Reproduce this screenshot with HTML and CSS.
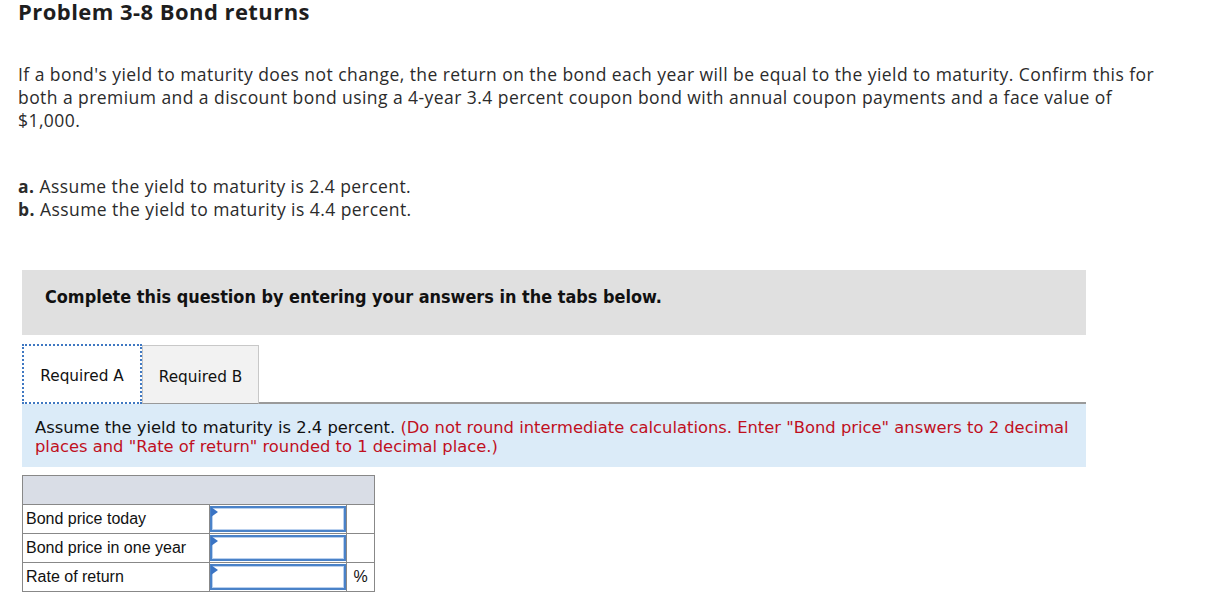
FILE: index.html
```html
<!DOCTYPE html>
<html>
<head>
<meta charset="utf-8">
<link rel="stylesheet" href="styles.css">
</head>
<body>
<div class="page">
  <h1 class="title">Problem 3-8 Bond returns</h1>
  <p class="intro">If a bond's yield to maturity does not change, the return on the bond each year will be equal to the yield to maturity. Confirm this for<br>both a premium and a discount bond using a 4-year 3.4 percent coupon bond with annual coupon payments and a face value of<br>$1,000.</p>
  <div class="parts">
    <div><b>a.</b> Assume the yield to maturity is 2.4 percent.</div>
    <div><b>b.</b> Assume the yield to maturity is 4.4 percent.</div>
  </div>
  <div class="notice">Complete this question by entering your answers in the tabs below.</div>
  <div class="tabs">
    <div class="tab active">Required A</div>
    <div class="tab">Required B</div>
    <div class="tab-rest"></div>
  </div>
  <div class="instr">Assume the yield to maturity is 2.4 percent. <span class="red">(Do not round intermediate calculations. Enter "Bond price" answers to 2 decimal<br>places and "Rate of return" rounded to 1 decimal place.)</span></div>
  <table class="grid">
    <tr class="head"><td colspan="3"></td></tr>
    <tr><td class="lbl">Bond price today</td><td class="inp"><div class="box"></div></td><td class="unit"></td></tr>
    <tr><td class="lbl">Bond price in one year</td><td class="inp"><div class="box"></div></td><td class="unit"></td></tr>
    <tr><td class="lbl">Rate of return</td><td class="inp"><div class="box"></div></td><td class="unit">%</td></tr>
  </table>
</div>
</body>
</html>
```
FILE: styles.css
```css
html, body { margin: 0; padding: 0; background: #fff; }
.page { padding: 0 0 0 18px; font-family: "Open Sans", "Liberation Sans", sans-serif; color: #2b2b2b; }
.title { margin: 0; font-size: 22px; line-height: 23px; font-weight: 700; letter-spacing: 0.45px; color: #1e1e1e; }
.intro { margin: 40px 0 0 0; font-size: 17.5px; line-height: 23px; letter-spacing: 0.44px; white-space: nowrap; }
.parts { margin-top: 43px; font-size: 17.5px; line-height: 23px; letter-spacing: 0.44px; }
.parts b { font-weight: 700; }
.notice { margin: 49px 0 0 4px; width: 1064px; height: 65px; box-sizing: border-box; padding: 16px 0 0 23px; background: #e0e0e0; font-family: "DejaVu Sans", sans-serif; font-stretch: condensed; font-weight: 700; font-size: 17.9px; color: #111; }
.tabs { margin: 9px 0 0 4px; width: 1064px; display: flex; align-items: flex-end; font-family: "DejaVu Sans", sans-serif; font-size: 15.3px; color: #111; }
.tab { height: 59px; box-sizing: border-box; display: flex; align-items: center; justify-content: center; padding-top: 4px; }
.tab.active { width: 120px; height: 60px; border: 2px dotted #3f78c2; background: #fff; }
.tab:not(.active) { width: 117px; background: #f2f2f2; border: 1px solid #c8c8c8; border-bottom: 1px solid #999; }
.tab-rest { flex: 1; border-bottom: 2px solid #9a9a9a; height: 0; }
.instr { margin-left: 4px; width: 1064px; box-sizing: border-box; height: 63px; padding: 14px 10px 0 13px; background: #dbebf8; font-family: "DejaVu Sans", sans-serif; font-size: 16.35px; line-height: 19px; color: #111; white-space: nowrap; }
.red { color: #c0101e; }
.grid { margin: 8px 0 0 4px; border-collapse: collapse; font-family: "Liberation Sans", sans-serif; font-size: 16px; color: #111; }
.grid td { border: 1px solid #888; padding: 0; height: 28px; }
.head td { background: #d9dde6; height: 28px; width: 351px; }
.lbl { width: 183px; padding-left: 3px !important; }
.inp { width: 136px; }
.unit { width: 27px; text-align: center; }
.box { position: relative; height: 26px; box-sizing: border-box; border: 2px solid #4a82c8; box-shadow: inset 0 0 0 1px #b9d0ee; background: #fff; }
.box::before { content: ""; position: absolute; left: -1px; top: -1px; border-left: 7px solid #3a74c4; border-top: 5px solid transparent; border-bottom: 5px solid transparent; }
```
